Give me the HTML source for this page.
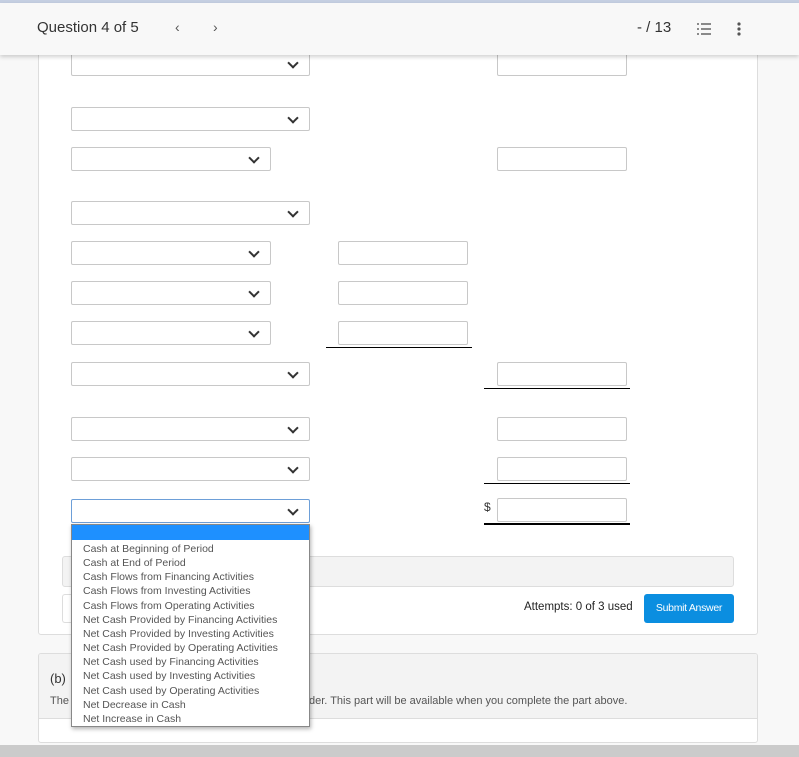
<!DOCTYPE html>
<html><head><style>
*{box-sizing:border-box}
body{margin:0;width:799px;height:757px;overflow:hidden;background:#f8f8f8;font-family:"Liberation Sans",sans-serif;position:relative}
.a{position:absolute}
.sel{position:absolute;height:24px;border:1px solid #c8c8c8;background:#fff;border-radius:2px}
.sel::after{content:"";position:absolute;right:12px;top:6px;width:6px;height:6px;border-right:2px solid #333;border-bottom:2px solid #333;transform:rotate(45deg)}
.inp{position:absolute;height:24px;width:130px;border:1px solid #c8c8c8;background:#fff;border-radius:2px}
.ln{position:absolute;height:1px;background:#000}
</style></head><body>
<div class="a" style="left:0;top:0;width:799px;height:3px;background:#c5cfe2"></div>
<div class="a" style="left:38px;top:40px;width:720px;height:595px;background:#fff;border:1px solid #ddd;border-radius:3px"></div>

<div class="sel" style="left:71px;top:52px;width:239px"></div>
<div class="sel" style="left:71px;top:107px;width:239px"></div>
<div class="sel" style="left:71px;top:147px;width:200px"></div>
<div class="sel" style="left:71px;top:201px;width:239px"></div>
<div class="sel" style="left:71px;top:241px;width:200px"></div>
<div class="sel" style="left:71px;top:281px;width:200px"></div>
<div class="sel" style="left:71px;top:321px;width:200px"></div>
<div class="sel" style="left:71px;top:362px;width:239px"></div>
<div class="sel" style="left:71px;top:417px;width:239px"></div>
<div class="sel" style="left:71px;top:457px;width:239px"></div>
<div class="sel" style="left:71px;top:499px;width:239px;border-color:#6d9fd8"></div>

<div class="inp" style="left:497px;top:52px"></div>
<div class="inp" style="left:497px;top:147px"></div>
<div class="inp" style="left:338px;top:241px"></div>
<div class="inp" style="left:338px;top:281px"></div>
<div class="inp" style="left:338px;top:321px"></div>
<div class="ln" style="left:326px;top:347px;width:146px"></div>
<div class="inp" style="left:497px;top:362px"></div>
<div class="ln" style="left:484px;top:388px;width:146px"></div>
<div class="inp" style="left:497px;top:417px"></div>
<div class="inp" style="left:497px;top:457px"></div>
<div class="ln" style="left:484px;top:483px;width:146px"></div>
<div class="a" style="left:484px;top:500px;font-size:12px;color:#333">$</div>
<div class="inp" style="left:497px;top:498px"></div>
<div class="ln" style="left:484px;top:523px;width:146px;height:2px"></div>

<div class="a" style="left:62px;top:556px;width:672px;height:31px;background:#f3f3f3;border:1px solid #ddd;border-radius:3px"></div>
<div class="a" style="left:62px;top:594px;width:20px;height:29px;border:1px solid #ddd;border-right:none;border-radius:3px 0 0 3px"></div>
<div class="a" style="left:524px;top:601px;font-size:11.5px;color:#222">Attempts: 0 of 3 used</div>
<div class="a" style="left:644px;top:594px;width:90px;height:29px;background:#0b8ee0;border-radius:3px;color:#fff;font-size:10.5px;line-height:29px;text-align:center;letter-spacing:-0.3px">Submit Answer</div>

<div class="a" style="left:38px;top:653px;width:720px;height:90px;background:#fff;border:1px solid #ddd;border-radius:3px;overflow:hidden">
<div style="height:65px;background:#f3f3f3;border-bottom:1px solid #ddd;position:relative">
<div class="a" style="left:11px;top:17px;font-size:13px;color:#333">(b)</div>
<div class="a" style="left:11px;top:41px;font-size:11px;color:#555">The</div>
<div class="a" style="left:270px;top:41px;font-size:11px;color:#555">der. This part will be available when you complete the part above.</div>
</div></div>
<div class="a" style="left:0;top:745px;width:799px;height:12px;background:#cbcbcb"></div>

<div class="a" style="left:71px;top:524px;width:239px;height:203px;background:#fff;border:1px solid #888;box-shadow:1px 2px 4px rgba(0,0,0,.3);font-size:10.5px;color:#555;line-height:14.15px">
<div style="height:15px;background:#1e90ff"></div>
<div style="padding:2px 0 0 11px">Cash at Beginning of Period<br>Cash at End of Period<br>Cash Flows from Financing Activities<br>Cash Flows from Investing Activities<br>Cash Flows from Operating Activities<br>Net Cash Provided by Financing Activities<br>Net Cash Provided by Investing Activities<br>Net Cash Provided by Operating Activities<br>Net Cash used by Financing Activities<br>Net Cash used by Investing Activities<br>Net Cash used by Operating Activities<br>Net Decrease in Cash<br>Net Increase in Cash</div>
</div>

<div class="a" style="left:0;top:3px;width:799px;height:52px;background:#f8f8f8;box-shadow:0 2px 4px rgba(0,0,0,.18)">
<div class="a" style="left:37px;top:16px;font-size:15px;color:#333">Question 4 of 5</div>
<div class="a" style="left:175px;top:16px;font-size:14px;color:#555">‹</div>
<div class="a" style="left:213px;top:16px;font-size:14px;color:#555">›</div>
<div class="a" style="left:637px;top:16px;font-size:15px;color:#333">- / 13</div>
<svg class="a" style="left:696px;top:19px" width="16" height="14"><g stroke="#666" stroke-width="1.4"><path d="M5 2h10M5 7h10M5 12h10"/><path d="M1 2h2M1 7h2M1 12h2"/></g></svg>
<svg class="a" style="left:736px;top:18px" width="6" height="16"><circle cx="3" cy="3" r="1.6" fill="#555"/><circle cx="3" cy="8" r="1.6" fill="#555"/><circle cx="3" cy="13" r="1.6" fill="#555"/></svg>
</div>
</body></html>
